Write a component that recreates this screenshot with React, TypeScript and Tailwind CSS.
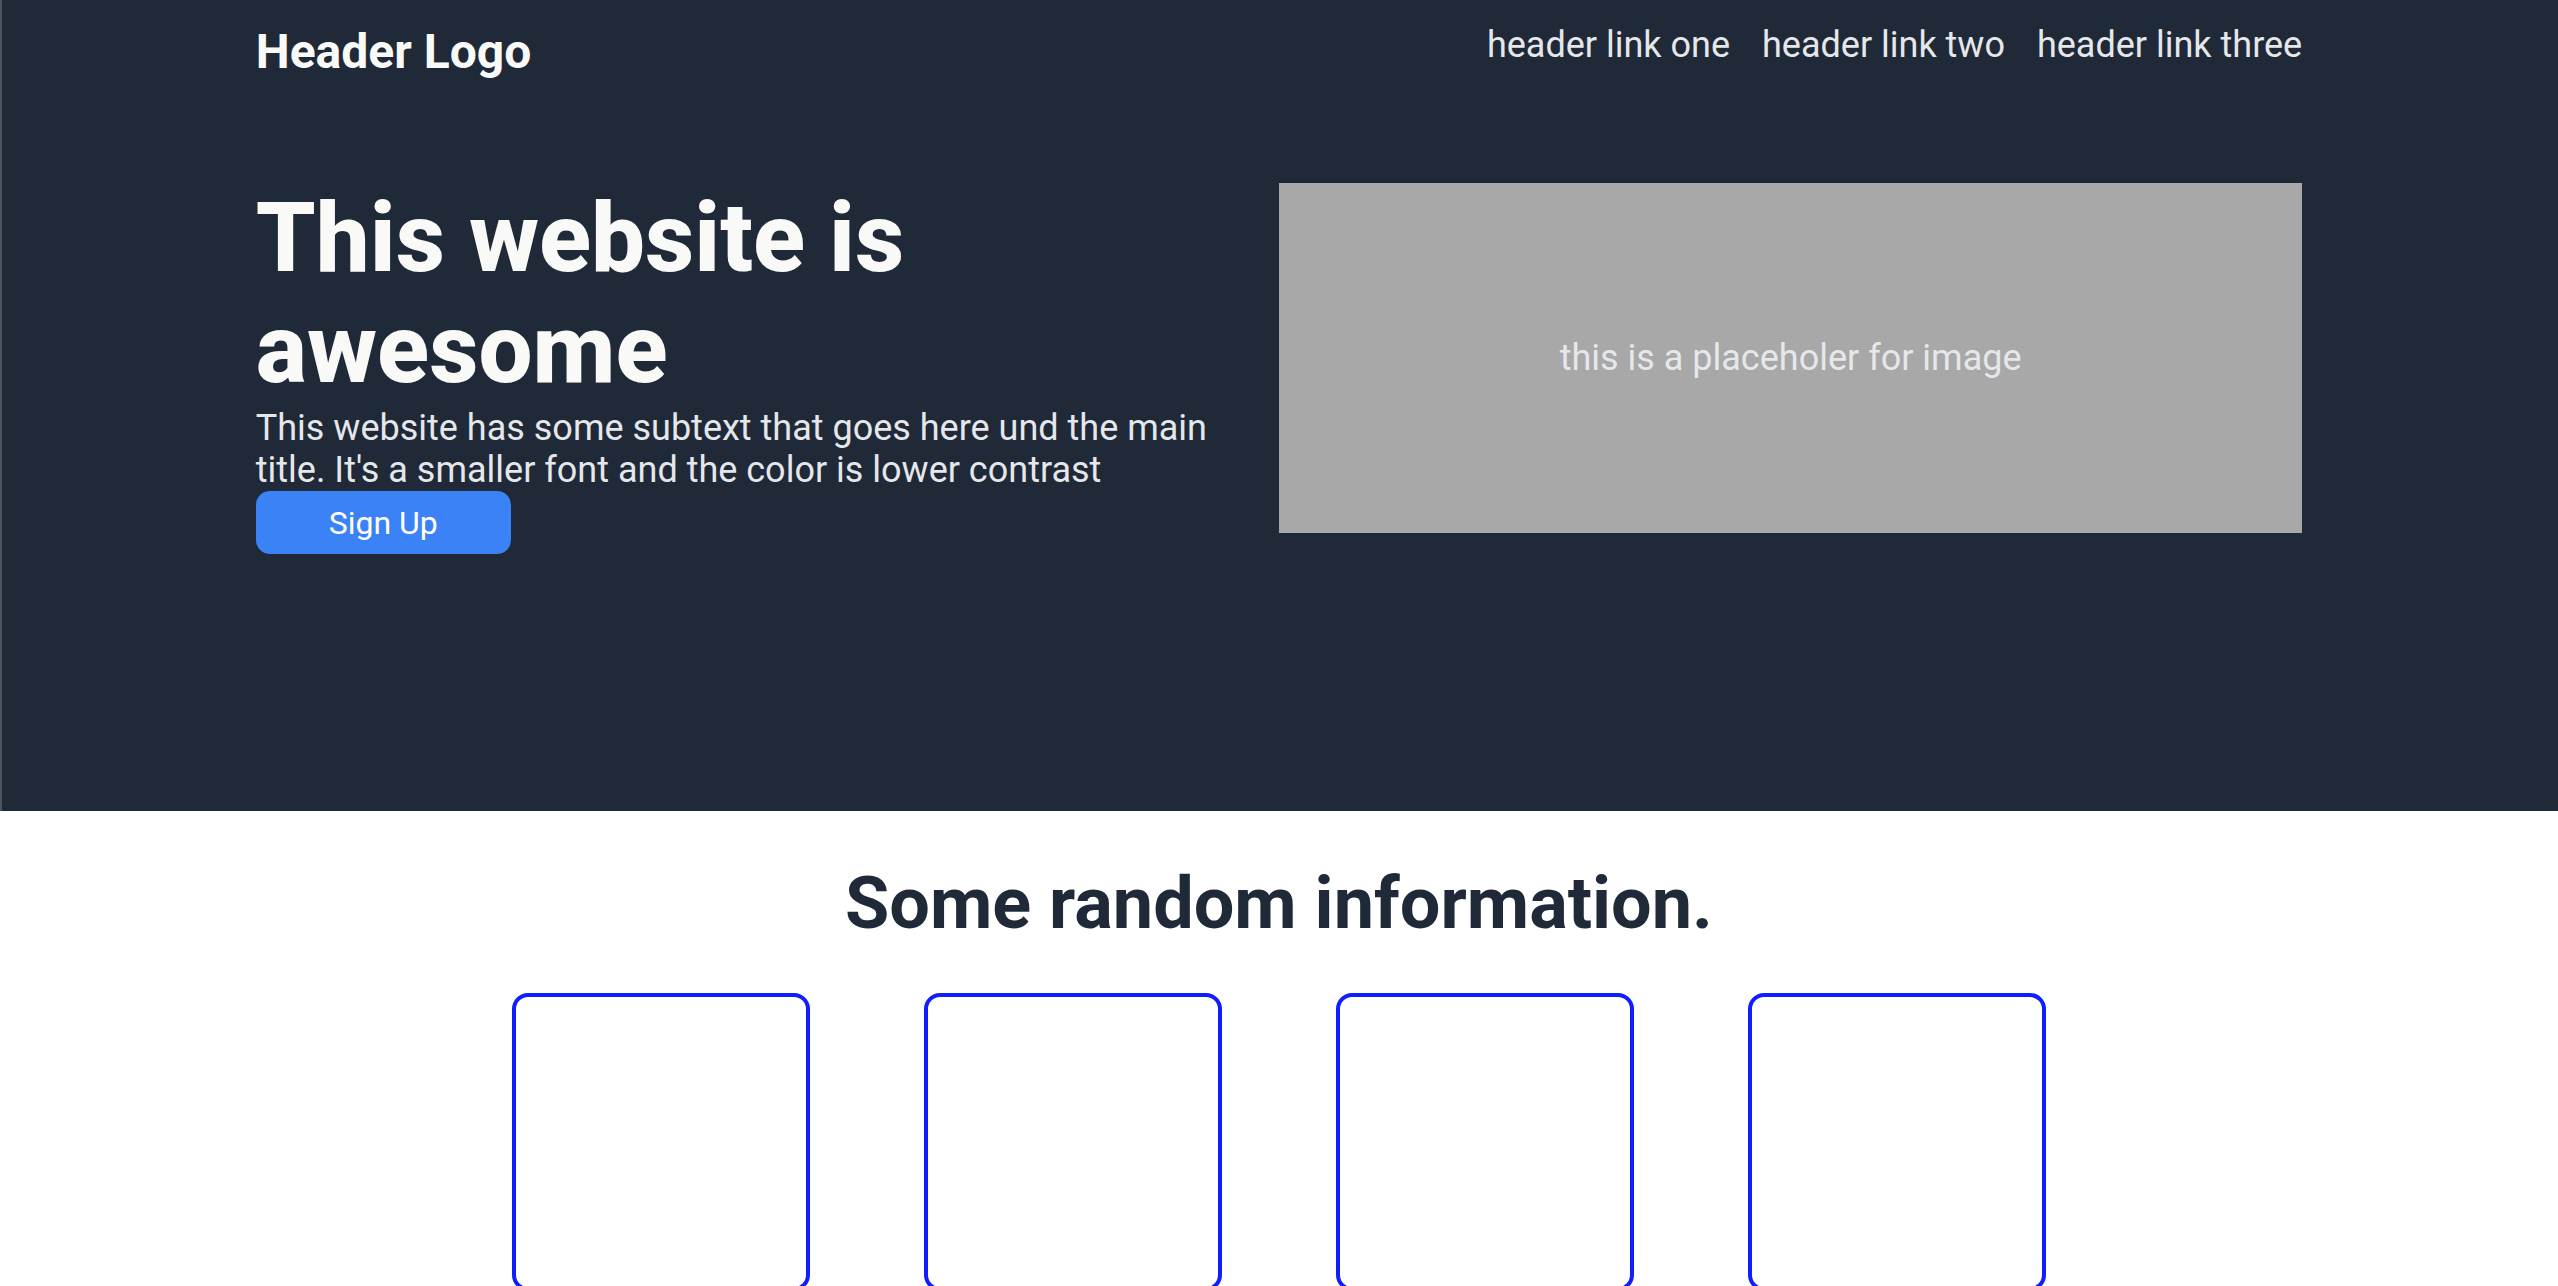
const links = ["header link one", "header link two", "header link three"]

const Card = () => (
    <div className="w-[298px] h-[298px] shrink-0 rounded-[16px] border-4 border-[#0f1dff] bg-white"></div>
)

export default function App() {
    return (
        <div className="min-h-screen bg-white font-['Roboto',sans-serif]">
            <section className="bg-[#1f2937] shadow-[inset_2px_0_0_#4b5260] pb-[257px]">
                <div className="w-[80%] mx-auto">
                    <header className="flex justify-between items-start pt-[24px]">
                        <div className="text-[48px] leading-[56px] font-bold text-[#f9faf8]">Header Logo</div>
                        <nav className="flex gap-[32px] text-[36px] leading-[42px] text-[#e5e7eb]">
                            {links.map((l) => (
                                <a key={l} href="#">{l}</a>
                            ))}
                        </nav>
                    </header>

                    <div className="flex items-start mt-[103px]">
                        <div className="flex-1">
                            <h1 className="text-[96px] leading-[111px] font-extrabold text-[#f9faf8]">This website is awesome</h1>
                            <p className="mt-[2px] text-[36px] leading-[42px] text-[#e5e7eb]">
                                This website has some subtext that goes here und the main title. It's a smaller font and the color is lower contrast
                            </p>
                            <button className="w-[255px] h-[63px] rounded-[14px] bg-[#3b82f6] text-white text-[32px]">
                                Sign Up
                            </button>
                        </div>
                        <div className="flex-1 h-[350px] bg-[#a8a8a8] flex items-center justify-center text-[36px] text-[#e5e7eb]">
                            this is a placeholer for image
                        </div>
                    </div>
                </div>
            </section>

            <section className="pt-[51px]">
                <h2 className="text-center text-[72px] leading-[84px] font-bold text-[#1f2937]">Some random information.</h2>
                <div className="flex justify-center gap-[114px] mt-[47px]">
                    <Card />
                    <Card />
                    <Card />
                    <Card />
                </div>
            </section>
        </div>
    )
}
